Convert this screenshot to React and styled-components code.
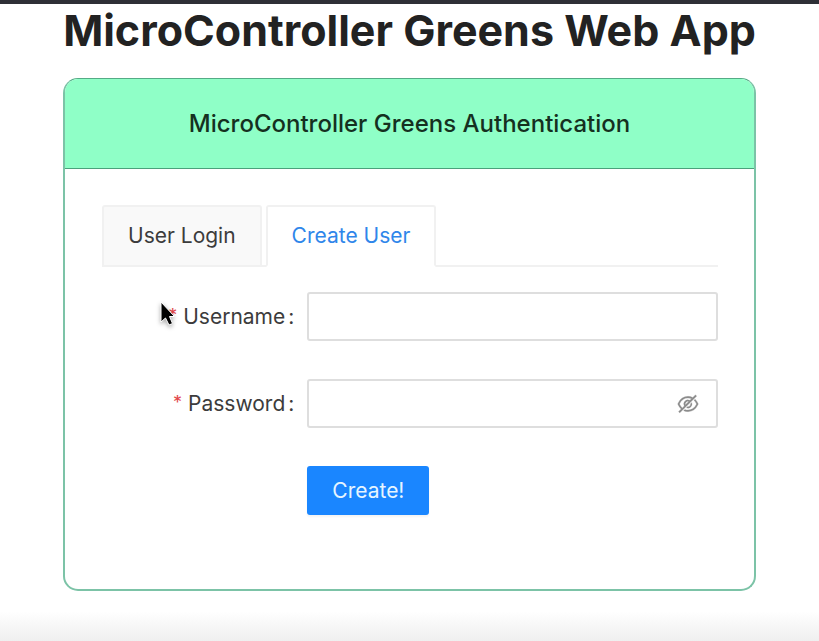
import React, { useState } from "react";
import styled, { createGlobalStyle } from "styled-components";
import { AiOutlineEye, AiOutlineEyeInvisible } from "react-icons/ai";

const GlobalStyle = createGlobalStyle`
  *, *::before, *::after { box-sizing: border-box; }
  body {
    margin: 0;
    background: #fff;
    color: #3c3c3c;
    font-family: Inter, "Liberation Sans", sans-serif;
    font-size: 21px;
    line-height: 34px;
  }
  button, input { font: inherit; }
`;

const Page = styled.div`
  display: flex;
  flex-direction: column;
  min-height: 100vh;
  border-top: 4px solid #2e2f36;
  background: linear-gradient(to top, #efefef, #fff 30px);
`;

const Main = styled.main`
  padding: 0 63px;
`;

const Title = styled.h1`
  display: flex;
  justify-content: center;
  margin: 0 0 22px;
  color: #222;
  font-size: 43px;
  font-weight: 700;
  line-height: 52px;
  white-space: nowrap;
`;

const Card = styled.section`
  overflow: hidden;
  border: 2px solid #7cc3a7;
  border-top: 1px solid #55ab86;
  border-radius: 15px;
  background: #fff;
`;

const CardHeader = styled.header`
  padding: 28px 24px 27px;
  border-bottom: 1px solid #4ba27c;
  background: #8fffc7;
  text-align: center;
`;

const CardTitle = styled.h2`
  margin: 0;
  color: #15301f;
  font-size: 24px;
  font-weight: 500;
  line-height: 34px;
`;

const CardBody = styled.div`
  padding: 36px 36px 74px 37px;
`;

const TabList = styled.div`
  display: flex;
  gap: 4px;
  margin-bottom: 25px;
  box-shadow: inset 0 -2px #f1f1f1;
`;

const Tab = styled.button`
  height: 62px;
  padding: 0 24px;
  border: 2px solid #f1f1f1;
  border-bottom-color: ${(p) => (p.$active ? "#fff" : "#f1f1f1")};
  border-radius: 3px 3px 0 0;
  background: ${(p) => (p.$active ? "#fff" : "#f9f9f9")};
  color: ${(p) => (p.$active ? "#2f86ea" : "#3c3c3c")};
  white-space: nowrap;
  cursor: pointer;
`;

const Form = styled.form`
  display: grid;
  gap: 38px;
`;

const FormRow = styled.div`
  display: grid;
  grid-template-columns: 1fr 2fr;
  align-items: center;
`;

const LabelCell = styled.div`
  display: flex;
  justify-content: flex-end;
  padding-right: 13px;
`;

const Label = styled.label`
  position: relative;
  display: flex;
  white-space: nowrap;
`;

const Required = styled.span`
  margin-right: 6px;
  color: #e2474a;
  font-size: 18px;
  line-height: 32px;
`;

const Colon = styled.span`
  margin-left: 3px;
`;

const Field = styled.div`
  display: flex;
  align-items: center;
  height: 49px;
  padding: 0 16px;
  border: 2px solid #dedede;
  border-radius: 3px;
  background: #fff;

  &:focus-within { border-color: #40a0ff; }
`;

const Input = styled.input`
  flex: 1;
  min-width: 0;
  padding: 0;
  border: 0;
  outline: 0;
  background: transparent;
  color: inherit;
`;

const IconButton = styled.button`
  display: flex;
  padding: 0;
  border: 0;
  background: none;
  color: #8c8c8c;
  font-size: 24px;
  cursor: pointer;

  svg { stroke-width: 10px; }
`;

const SubmitButton = styled.button`
  grid-column: 2;
  justify-self: start;
  height: 49px;
  padding: 0 25px;
  border: 0;
  border-radius: 3px;
  background: #1a86ff;
  box-shadow: 0 2px 2px #0000000c;
  color: #e6f5ff;
  cursor: pointer;
`;

const Pointer = styled.svg`
  position: absolute;
  top: 0;
  left: -9px;
  width: 20px;
  height: 30px;
  filter: drop-shadow(0 2px 2px #0005);
  pointer-events: none;
`;

function FieldLabel({ htmlFor, children, overlay }) {
  return (
    <LabelCell>
      <Label htmlFor={htmlFor}>
        <Required aria-hidden="true">*</Required>
        {children}
        <Colon>:</Colon>
        {overlay}
      </Label>
    </LabelCell>
  );
}

function PointerArrow() {
  return (
    <Pointer viewBox="0 0 20 30" aria-hidden="true">
      <path
        d="M2 2V22L6.5 18L10 25L13.5 23.5L10.5 16.5H15.5Z"
        fill="#000"
        stroke="#fff"
        strokeWidth="1"
        strokeLinejoin="round"
      />
    </Pointer>
  );
}

export default function App() {
  const [tab, setTab] = useState("create");
  const [visible, setVisible] = useState(false);

  return (
    <Page>
      <GlobalStyle />
      <Main>
        <Title>MicroController Greens Web App</Title>
        <Card>
          <CardHeader>
            <CardTitle>MicroController Greens Authentication</CardTitle>
          </CardHeader>
          <CardBody>
            <TabList role="tablist">
              <Tab type="button" role="tab" aria-selected={tab === "login"} $active={tab === "login"} onClick={() => setTab("login")}>
                User Login
              </Tab>
              <Tab type="button" role="tab" aria-selected={tab === "create"} $active={tab === "create"} onClick={() => setTab("create")}>
                Create User
              </Tab>
            </TabList>
            <Form onSubmit={(e) => e.preventDefault()}>
              <FormRow>
                <FieldLabel htmlFor="username" overlay={<PointerArrow />}>Username</FieldLabel>
                <Field>
                  <Input id="username" type="text" required />
                </Field>
              </FormRow>
              <FormRow>
                <FieldLabel htmlFor="password">Password</FieldLabel>
                <Field>
                  <Input id="password" type={visible ? "text" : "password"} required />
                  <IconButton type="button" aria-label="Toggle password visibility" onClick={() => setVisible(!visible)}>
                    {visible ? <AiOutlineEye /> : <AiOutlineEyeInvisible />}
                  </IconButton>
                </Field>
              </FormRow>
              <FormRow>
                <SubmitButton type="submit">Create!</SubmitButton>
              </FormRow>
            </Form>
          </CardBody>
        </Card>
      </Main>
    </Page>
  );
}
